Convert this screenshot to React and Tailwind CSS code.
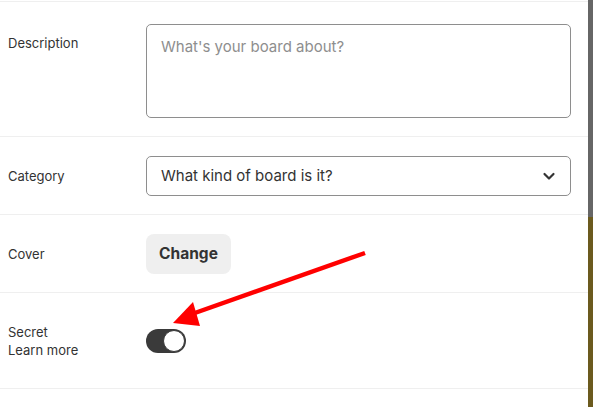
import React from "react";

function Row({ label, children, className = "" }) {
  return (
    <div className={"flex border-b border-[#efefef] " + className}>
      <div className="w-[146px] shrink-0 pl-2 text-[13px] leading-[18px] text-[#333]">{label}</div>
      <div className="flex-1 pr-[17px]">{children}</div>
    </div>
  );
}

export default function App() {
  return (
    <div className="relative flex h-[407px] w-[593px] overflow-hidden bg-white" style={{ fontFamily: "Inter, 'Liberation Sans', sans-serif" }}>
      <div className="mt-[1px] flex w-[588px] flex-col border-t border-[#efefef]">
        <Row label={<div className="pt-[10px]">Description</div>} className="pt-[22px] pb-[18px]">
          <div className="h-[94px] rounded-[5px] border border-[#8e8e8e] px-[14px] pt-[12px] text-[15px] leading-[20px] text-[#8e8e8e]">
            What's your board about?
          </div>
        </Row>
        <Row label={<div className="pt-[11px]">Category</div>} className="pt-[19px] pb-[18px]">
          <div className="flex h-[40px] items-center justify-between rounded-[5px] border border-[#8e8e8e] pl-[14px] pr-[14px] text-[15px] text-[#333]">
            <span>What kind of board is it?</span>
            <svg width="14" height="14" viewBox="0 0 14 14" fill="none">
              <path d="M2.5 5L7 9.5L11.5 5" stroke="#333" strokeWidth="2.2" strokeLinecap="round" strokeLinejoin="round" />
            </svg>
          </div>
        </Row>
        <Row label={<div className="pt-[11px]">Cover</div>} className="pt-[19px] pb-[18px]">
          <button className="flex h-[40px] w-[85px] items-center justify-center rounded-[8px] bg-[#efefef] text-[15.5px] font-bold text-[#333]">Change</button>
        </Row>
        <Row label={<div className="pt-[30px]"><div>Secret</div><div>Learn more</div></div>} className="pb-[29px]">
          <div className="pt-[36px]">
            <div className="flex h-[24px] w-[40px] items-center justify-end rounded-full bg-[#3a3a3a] pr-[1px]">
              <div className="h-[22px] w-[22px] rounded-full border border-[#3a3a3a] bg-white" />
            </div>
          </div>
        </Row>
      </div>
      <div className="flex w-[5px] flex-col">
        <div className="h-[217px] bg-[#666666]" />
        <div className="flex-1 bg-[#6b5a1e]" />
      </div>
      <svg className="pointer-events-none absolute left-0 top-0" width="593" height="407">
        <line x1="365" y1="253" x2="192" y2="314" stroke="#ff0000" strokeWidth="4.5" />
        <polygon points="173,323 193,302 200,326" fill="#ff0000" />
      </svg>
    </div>
  );
}
